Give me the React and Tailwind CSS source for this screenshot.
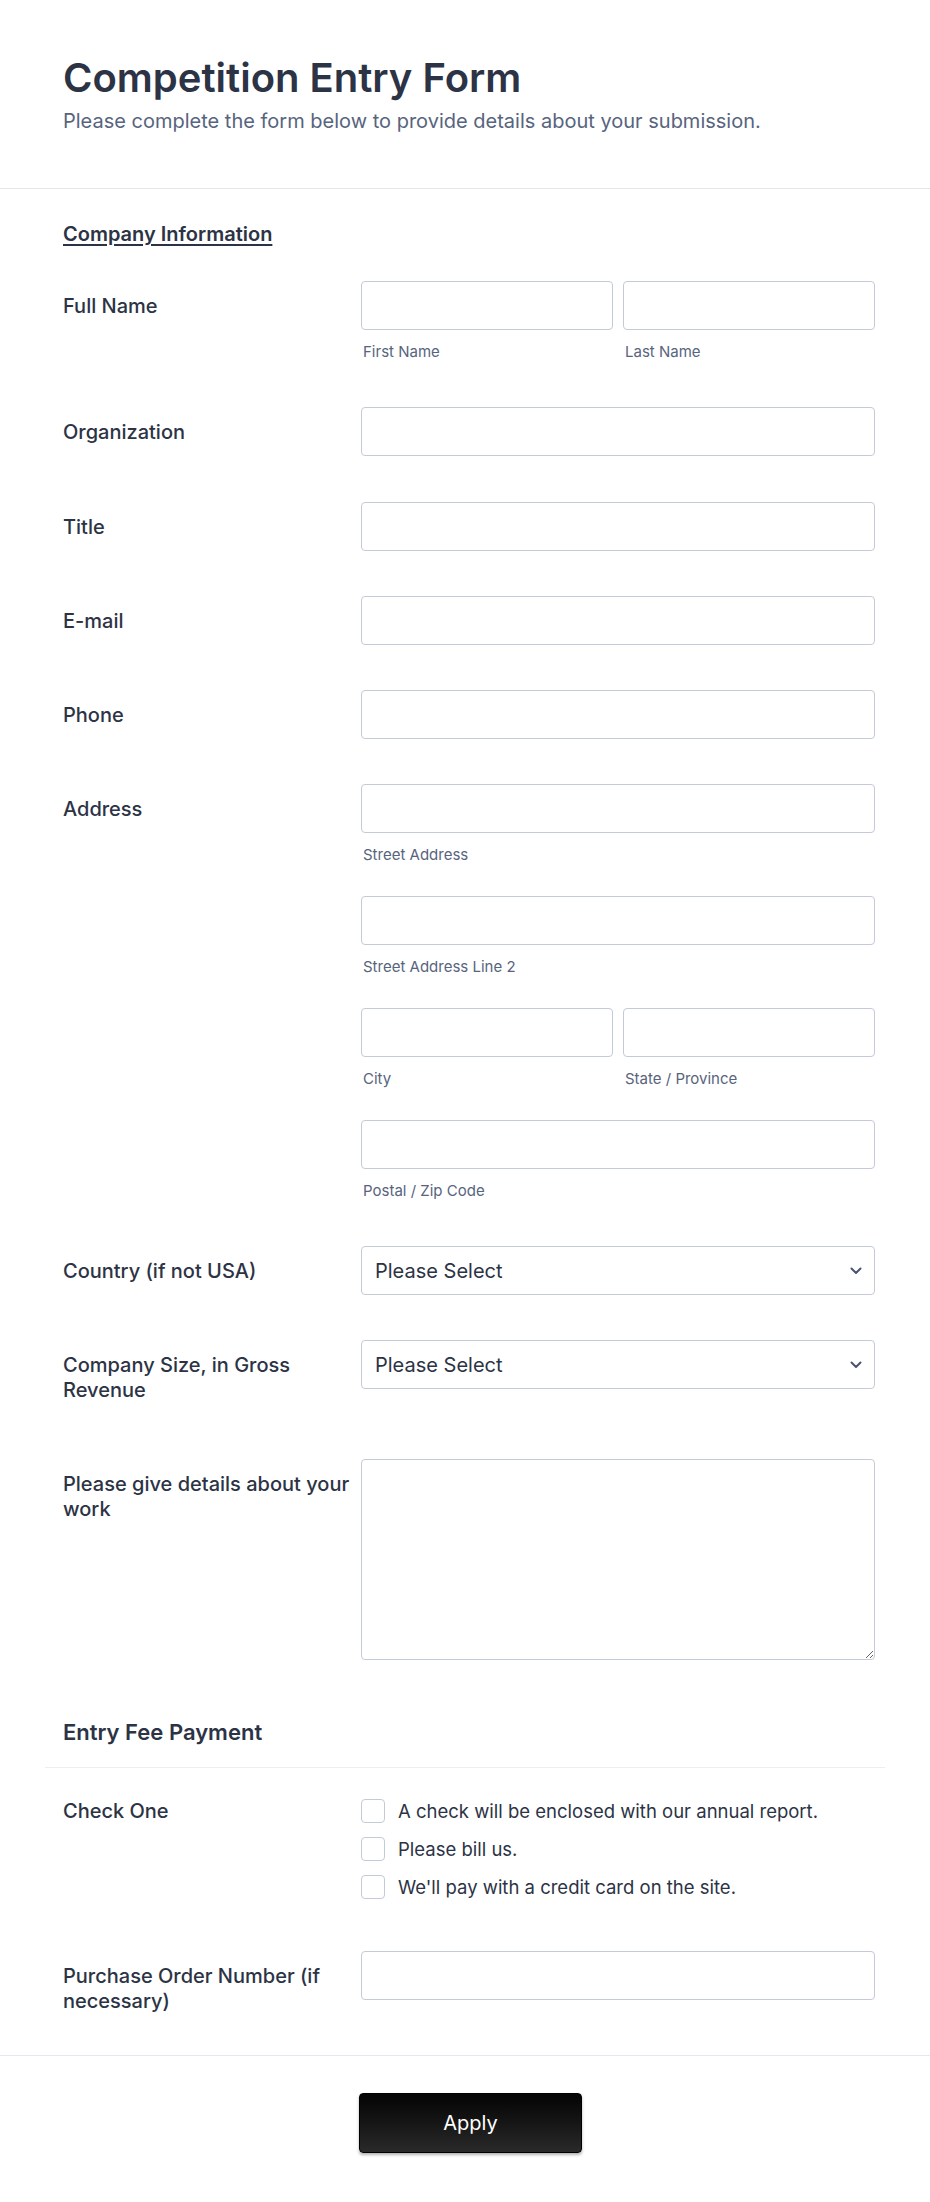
import React from 'react'

const Label = ({ children }) => (
  <div className="w-[298px] shrink-0 pt-[13px] pr-[8px] text-[20px] leading-[25px] font-medium text-[#2c3345]">
    {children}
  </div>
)

const Input = () => (
  <input
    type="text"
    className="block h-[49px] w-full rounded-[4px] border border-[#c3cad8] bg-white px-3 text-[20px] text-[#2c3345] outline-none"
  />
)

const Sub = ({ children }) => (
  <div className="mt-[12px] pl-[2px] text-[15px] leading-[20px] text-[#57647e]">{children}</div>
)

const Select = () => (
  <div className="relative">
    <select className="block h-[49px] w-full appearance-none rounded-[4px] border border-[#c3cad8] bg-white pl-[13px] pr-10 text-[20px] text-[#2c3345] outline-none">
      <option>Please Select</option>
    </select>
    <svg
      className="pointer-events-none absolute right-[13px] top-1/2 -translate-y-1/2"
      width="12"
      height="8"
      viewBox="0 0 12 8"
      fill="none"
      stroke="#4a5370"
      strokeWidth="2"
      strokeLinecap="round"
      strokeLinejoin="round"
    >
      <polyline points="1.5 1.5 6 6 10.5 1.5" />
    </svg>
  </div>
)

const Check = ({ children }) => (
  <label className="flex items-center gap-[13px] text-[18.5px] leading-[24px] text-[#2c3345]">
    <span className="h-[24px] w-[24px] shrink-0 rounded-[4px] border border-[#c3cad8] bg-white" />
    {children}
  </label>
)

export default function App() {
  return (
    <div className="w-full min-h-[2202px] bg-white font-['Inter','Noto_Sans',sans-serif] text-[#2c3345]">
      {/* Header */}
      <div className="border-b border-[#e3e5ea] px-[63px] pt-[54px] pb-[54px]">
        <h1 className="text-[40px] leading-[48px] font-semibold text-[#2c3345]">Competition Entry Form</h1>
        <p className="mt-[6px] text-[20px] leading-[26px] text-[#57647e]">
          Please complete the form below to provide details about your submission.
        </p>
      </div>

      {/* Body */}
      <div className="px-[45px] pb-[41px]">
        <div className="pl-[18px] pr-[10px]">
          <h2 className="pt-[32px] text-[20px] leading-[26px] font-semibold underline underline-offset-[3px]">
            Company Information
          </h2>

          <div className="mt-[34px] flex">
            <Label>Full Name</Label>
            <div className="flex flex-1 gap-[10px]">
              <div className="flex-1">
                <Input />
                <Sub>First Name</Sub>
              </div>
              <div className="flex-1">
                <Input />
                <Sub>Last Name</Sub>
              </div>
            </div>
          </div>

          <div className="mt-[45px] flex">
            <Label>Organization</Label>
            <div className="flex-1">
              <Input />
            </div>
          </div>

          <div className="mt-[46px] flex">
            <Label>Title</Label>
            <div className="flex-1">
              <Input />
            </div>
          </div>

          <div className="mt-[45px] flex">
            <Label>E-mail</Label>
            <div className="flex-1">
              <Input />
            </div>
          </div>

          <div className="mt-[45px] flex">
            <Label>Phone</Label>
            <div className="flex-1">
              <Input />
            </div>
          </div>

          <div className="mt-[45px] flex">
            <Label>Address</Label>
            <div className="flex flex-1 flex-col gap-[31px]">
              <div>
                <Input />
                <Sub>Street Address</Sub>
              </div>
              <div>
                <Input />
                <Sub>Street Address Line 2</Sub>
              </div>
              <div className="flex gap-[10px]">
                <div className="flex-1">
                  <Input />
                  <Sub>City</Sub>
                </div>
                <div className="flex-1">
                  <Input />
                  <Sub>State / Province</Sub>
                </div>
              </div>
              <div>
                <Input />
                <Sub>Postal / Zip Code</Sub>
              </div>
            </div>
          </div>

          <div className="mt-[45px] flex">
            <Label>Country (if not USA)</Label>
            <div className="flex-1">
              <Select />
            </div>
          </div>

          <div className="mt-[45px] flex">
            <Label>Company Size, in Gross Revenue</Label>
            <div className="flex-1">
              <Select />
            </div>
          </div>

          <div className="mt-[56px] flex">
            <Label>Please give details about your work</Label>
            <div className="flex-1">
              <textarea className="block h-[201px] w-full rounded-[4px] border border-[#c3cad8] bg-white p-3 text-[20px] outline-none" />
            </div>
          </div>
        </div>

        {/* Entry fee section */}
        <div className="mt-[58px] border-b border-[#eceef3] pl-[18px] pb-[21px]">
          <h2 className="text-[22px] leading-[28px] font-semibold text-[#2c3345]">Entry Fee Payment</h2>
        </div>

        <div className="pl-[18px] pr-[10px]">
          <div className="mt-[18px] flex">
            <Label>Check One</Label>
            <div className="flex flex-1 flex-col gap-[14px] pt-[13px]">
              <Check>A check will be enclosed with our annual report.</Check>
              <Check>Please bill us.</Check>
              <Check>We'll pay with a credit card on the site.</Check>
            </div>
          </div>

          <div className="mt-[52px] flex">
            <Label>Purchase Order Number (if necessary)</Label>
            <div className="flex-1">
              <Input />
            </div>
          </div>
        </div>
      </div>

      {/* Footer */}
      <div className="flex justify-center border-t border-[#e6e8ef] pt-[37px] pb-[49px] pl-[11px]">
        <button
          type="button"
          className="h-[60px] w-[223px] rounded-[4px] border border-black bg-linear-to-b from-[#050505] to-[#2a2a2a] text-[20px] font-normal text-white shadow-[0_2px_3px_rgba(0,0,0,0.3)]"
        >
          Apply
        </button>
      </div>
    </div>
  )
}
